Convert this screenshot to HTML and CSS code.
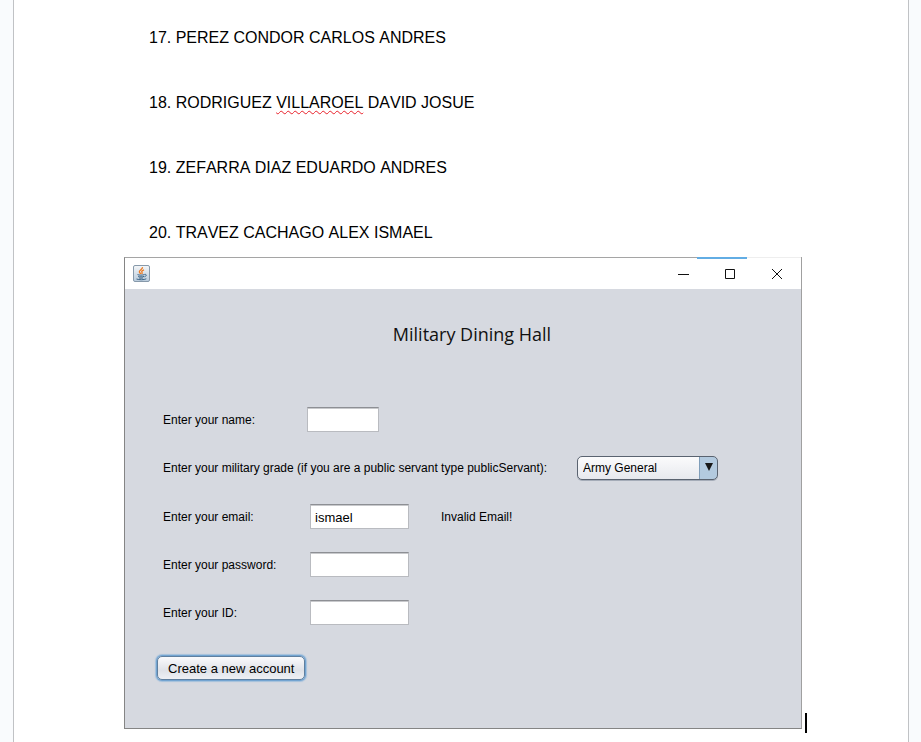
FILE: index.html
```html
<!DOCTYPE html>
<html lang="es">
<head>
<meta charset="utf-8">
<title>Military Dining Hall</title>
<link rel="stylesheet" href="styles.css">
</head>
<body>
<main class="page">
  <ol class="names" start="17">
    <li>17. PEREZ CONDOR CARLOS ANDRES</li>
    <li>18. RODRIGUEZ <span class="misspelled">VILLAROEL</span> DAVID JOSUE</li>
    <li>19. ZEFARRA DIAZ EDUARDO ANDRES</li>
    <li>20. TRAVEZ CACHAGO ALEX ISMAEL</li>
  </ol>
  <div class="figure">
    <section class="window" lang="en">
      <header class="titlebar">
        <svg class="java" viewBox="0 0 17 17" aria-hidden="true">
          <defs><linearGradient id="tile" x1="0" y1="0" x2="0" y2="1"><stop offset="0" stop-color="#f4f6f8"/><stop offset="1" stop-color="#b9cbdc"/></linearGradient></defs>
          <rect x=".5" y=".5" width="16" height="16" rx="1.5" fill="url(#tile)" stroke="#8799aa"/>
          <path d="M9.5 2.2C10 4.2 6 5 6.3 6.8c.1.9 1.2 1.4 1.4 2.2M11 4.8C9 5.6 8.2 6.4 9 7.4c.4.6.2 1.1-.3 1.6" fill="none" stroke="#ee7a20" stroke-width="1.3"/>
          <path d="M4.5 9.6c1.5.7 5 .7 7 0M5.2 11.4c1.6.6 4 .6 5.8 0M5.8 12.9c1.4.4 3 .4 4.4 0M3.5 14c2.5 1 7.5 1 9.8-.2M11.6 9.4c2.3-.4 2.3 1.6-.2 2.4" fill="none" stroke="#3d6688"/>
        </svg>
        <div class="controls">
          <button class="control" type="button" aria-label="Minimize"><svg viewBox="0 0 12 12"><path d="M1 6.5h11"/></svg></button>
          <button class="control" type="button" aria-label="Maximize"><svg viewBox="0 0 12 12"><path d="M1.5 1.5h9v9h-9z"/></svg></button>
          <button class="control" type="button" aria-label="Close"><svg viewBox="0 0 12 12"><path d="M1 1l10 10M11 1L1 11"/></svg></button>
        </div>
      </header>
      <form class="form">
        <h1 class="title">Military Dining Hall</h1>
        <div class="row row-name"><label for="name">Enter your name:</label><input class="short" id="name" type="text"></div>
        <div class="row row-grade"><label for="grade">Enter your military grade (if you are a public servant type publicServant):</label>
          <div class="combo"><select id="grade"><option>Army General</option></select><svg class="arrow" viewBox="0 0 8 8" aria-hidden="true"><path d="M0 0h8L4 8z"/></svg></div></div>
        <div class="row"><label for="email">Enter your email:</label><input id="email" type="text" value="ismael"><output class="error" for="email">Invalid Email!</output></div>
        <div class="row"><label for="password">Enter your password:</label><input id="password" type="password"></div>
        <div class="row"><label for="id">Enter your ID:</label><input id="id" type="text"></div>
        <button class="create" type="button">Create a new account</button>
      </form>
    </section>
    <span class="caret"></span>
  </div>
</main>
</body>
</html>
```
FILE: styles.css
```css
* { box-sizing: border-box; }

body {
  margin: 0;
  padding: 0 12px 0 13px;
  background: #f9fbfd;
  color: #000;
  font-family: "Liberation Sans", Arial, sans-serif;
}

.page {
  min-height: 100vh;
  padding: 28px 101px 8px 110px;
  border: solid #c0c2c5;
  border-width: 0 1px;
  background: #fff;
}

.names {
  display: grid;
  gap: 45px;
  margin: 0 0 14px;
  padding: 0 0 0 25px;
  list-style: none;
  font-size: 16px;
  line-height: 20px;
  font-kerning: none;
}

.misspelled { text-decoration: underline wavy #e8202a 1px; text-underline-offset: 2px; text-decoration-skip-ink: none; }

.figure { display: flex; align-items: flex-end; gap: 3px; }

.caret { width: 2px; height: 20px; margin-bottom: -4px; background: #000; }

.window {
  position: relative;
  flex: 1;
  border: 1px solid #858585;
  border-top-color: #a5a5a5;
  border-right-color: #a0a0a0;
  background: #d6d9e0;
}

.window::before {
  content: "";
  position: absolute;
  top: -1px;
  right: 54px;
  width: 50px;
  height: 2px;
  background: #62ade4;
}

.window::after {
  content: "";
  position: absolute;
  top: -1px;
  right: 0;
  width: 54px;
  height: 1px;
  background: #eee;
}

.titlebar {
  display: flex;
  align-items: center;
  justify-content: space-between;
  height: 31px;
  padding: 0 1px 0 8px;
  background: #fff;
}

.java { width: 17px; height: 17px; }
.controls { display: flex; }

.control {
  display: flex;
  align-items: center;
  justify-content: center;
  width: 47px;
  height: 30px;
  padding: 0;
  border: 0;
  background: none;
}

.control svg { width: 12px; height: 12px; fill: none; stroke: #111; }

.form {
  padding: 30px 31px 48px;
  font-size: 12px;
  font-kerning: none;
}

.title {
  margin: 0 0 58px;
  padding-left: 18px;
  color: #111;
  font: 400 18px/30px "Open Sans", "Noto Sans", sans-serif;
  text-align: center;
}

.row {
  display: flex;
  align-items: center;
  height: 25px;
  margin-bottom: 23px;
  padding-left: 7px;
}

.row label { width: 147px; }
.row-name label { width: 144px; }
.row-grade { margin-bottom: 24px; }
.row-grade label { width: 400px; margin-right: 14px; }

input {
  width: 99px;
  height: 25px;
  padding: 2px 4px 0;
  border: 1px solid #b9bbc0;
  border-top-color: #8d8f94;
  background: #fff;
  box-shadow: inset 0 1px 0 #c8c9cc;
  color: #000;
  font: 13px "Liberation Sans", Arial, sans-serif;
}

input.short { width: 72px; }
.error { margin-left: 32px; }

.combo {
  position: relative;
  width: 141px;
}

select {
  display: block;
  appearance: none;
  width: 100%;
  height: 24px;
  padding: 0 22px 0 5px;
  border: 1px solid #5a6370;
  border-radius: 5px;
  background: linear-gradient(to right, transparent calc(100% - 18px), #7f9db9 calc(100% - 18px), #7f9db9 calc(100% - 17px), #b3cadf calc(100% - 17px)), linear-gradient(#fbfbfc, #e7e9ee);
  box-shadow: 0 1px 0 #a5acb8;
  color: #000;
  font: 12px "Liberation Sans", Arial, sans-serif;
}

.arrow {
  position: absolute;
  top: 7px;
  right: 5px;
  width: 8px;
  height: 8px;
  fill: #181818;
  pointer-events: none;
}

.create {
  display: block;
  height: 24px;
  margin: 31px 0 0 1px;
  padding: 0 10px;
  border: 1px solid #5f7f9f;
  border-radius: 5px;
  background: linear-gradient(#fafafc, #dfe2e8 60%, #eef0f4);
  box-shadow: 0 0 0 1px #73a4d1, 0 0 1px 2px #a3c0dc;
  color: #000;
  font: 13px "Liberation Sans", Arial, sans-serif;
}
```
